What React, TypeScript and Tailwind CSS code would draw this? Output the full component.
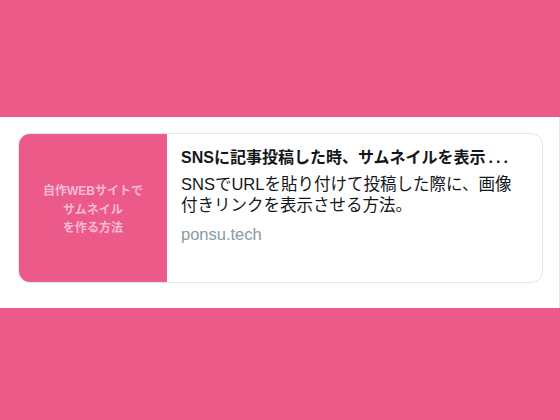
export default function App() {
  return (
    <div className="flex h-[420px] w-[560px] flex-col bg-[#ec5a8a] font-['Liberation_Sans','Noto_Sans_CJK_JP',sans-serif]">
      <div className="h-[117px] shrink-0" />
      {/* White band with link card */}
      <div className="flex h-[191px] shrink-0 items-start border-r border-[#e5e5e5] bg-white pl-[18px] pt-[16px]">
        <div className="flex h-[150px] w-[525px] overflow-hidden rounded-[12px] border border-[#e1e8ed]">
          <div className="flex w-[148px] shrink-0 items-center justify-center bg-[#ec5a8a] pt-[4px]">
            <p className="text-center text-[12px] font-bold leading-[18.5px] text-[#f6bcd6]">
              自作WEBサイトで
              <br />
              サムネイル
              <br />
              を作る方法
            </p>
          </div>
          <div className="flex w-[360px] flex-col pl-[14px] pt-[13px]">
            <p className="whitespace-nowrap text-[16px] font-bold leading-[22px] text-[#14171a]">
              SNSに記事投稿した時、サムネイルを表示<span className="ml-[3px] tracking-[3px]">...</span>
            </p>
            <p className="mt-[5px] w-[340px] text-[16.5px] leading-[21px] text-[#14171a]">
              SNSでURLを貼り付けて投稿した際に、画像付きリンクを表示させる方法。
            </p>
            <p className="mt-[7px] text-[16.5px] leading-[22px] text-[#8899a6]">ponsu.tech</p>
          </div>
        </div>
      </div>
      <div className="flex-1" />
    </div>
  );
}
